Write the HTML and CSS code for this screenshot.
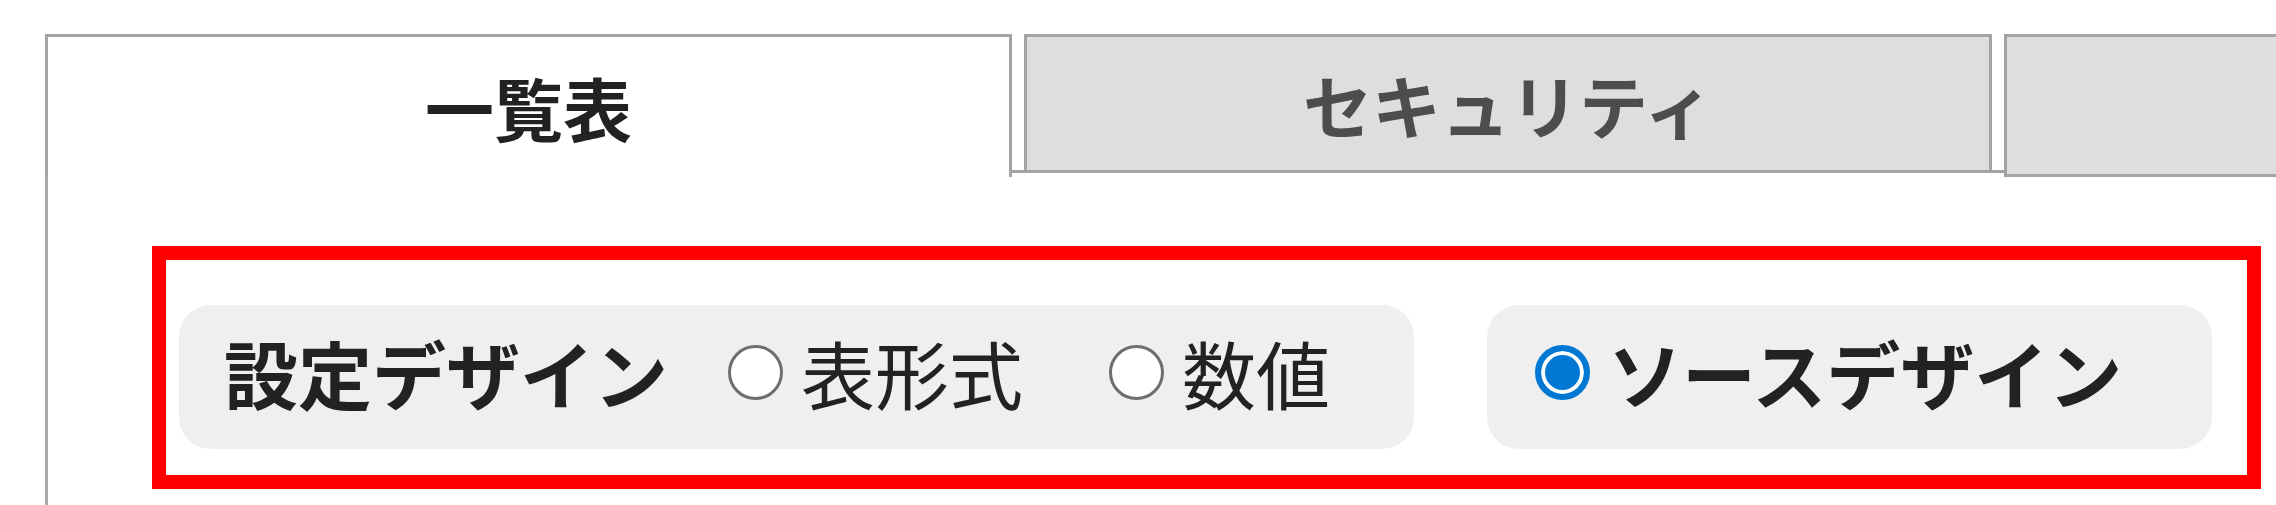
FILE: index.html
```html
<!DOCTYPE html>
<html lang="ja">
<head>
  <meta charset="UTF-8">
  <title>設定デザイン</title>
  <link rel="stylesheet" href="styles.css">
</head>
<body>
  <div class="tabs">
    <div class="tab active">一覧表</div>
    <div class="tab">セキュリティ</div>
    <div class="tab last"></div>
  </div>

  <div class="panel">
    <div class="highlight">
      <div class="pill">
        <span class="pill-label">設定デザイン</span>
        <label class="option">
          <input type="radio" name="design" value="table">
          <span>表形式</span>
        </label>
        <label class="option">
          <input type="radio" name="design" value="number">
          <span>数値</span>
        </label>
      </div>

      <div class="pill source">
        <label class="option strong">
          <input type="radio" name="design" value="source" checked>
          <span>ソースデザイン</span>
        </label>
      </div>
    </div>
  </div>
</body>
</html>
```

FILE: styles.css
```css
* {
  margin: 0;
  padding: 0;
  box-sizing: border-box;
}

html, body {
  height: 100%;
  overflow: hidden;
  background: #fff;
  color: #222;
  font-family: "Noto Sans CJK JP", "Noto Sans", sans-serif;
}

.tabs {
  display: flex;
  align-items: flex-start;
  gap: 12px;
  margin-left: 45px;
  padding-top: 34px;
  height: 173px;
  border-bottom: 3px solid #a4a4a4;
}

.tab {
  flex: none;
  width: 968px;
  height: 136px;
  display: flex;
  justify-content: center;
  align-items: center;
  background: #dedede;
  border: 3px solid #a4a4a4;
  border-bottom: none;
  font-size: 69px;
  font-weight: bold;
  color: #4d4d4d;
}

.tab.active {
  width: 967px;
  height: 143px;
  background: #fff;
  color: #222;
  position: relative;
  z-index: 1;
}

.tab.last {
  flex: 1;
  width: auto;
  height: 143px;
  border-right: none;
  border-bottom: 3px solid #a4a4a4;
}

.panel {
  margin-left: 45px;
  height: calc(100% - 173px);
  border-left: 3px solid #ababab;
  padding: 73px 0 0 104px;
}

.highlight {
  width: 2109px;
  height: 243px;
  border: 14px solid #ff0000;
  display: flex;
  align-items: flex-start;
  gap: 73px;
  padding: 45px 0 0 13px;
}

.pill {
  display: flex;
  align-items: center;
  height: 144px;
  padding: 0 84px 10px 45px;
  background: #efefef;
  border-radius: 32px;
  font-size: 74px;
  line-height: 1;
}

.pill.source {
  padding-left: 48px;
  width: 725px;
}

.pill-label {
  font-weight: bold;
  margin-right: 60px;
}

.option {
  display: flex;
  align-items: center;
  gap: 18px;
}

.option + .option {
  margin-left: 86px;
}

.option.strong {
  font-weight: bold;
}

.option input {
  appearance: none;
  flex: none;
  width: 55px;
  height: 55px;
  border: 3px solid #6e6e6e;
  border-radius: 50%;
  background: #fff;
}

.option input:checked {
  border: 6px solid #0078d4;
  box-shadow: inset 0 0 0 4px #fff;
  background: #0078d4;
}
```
